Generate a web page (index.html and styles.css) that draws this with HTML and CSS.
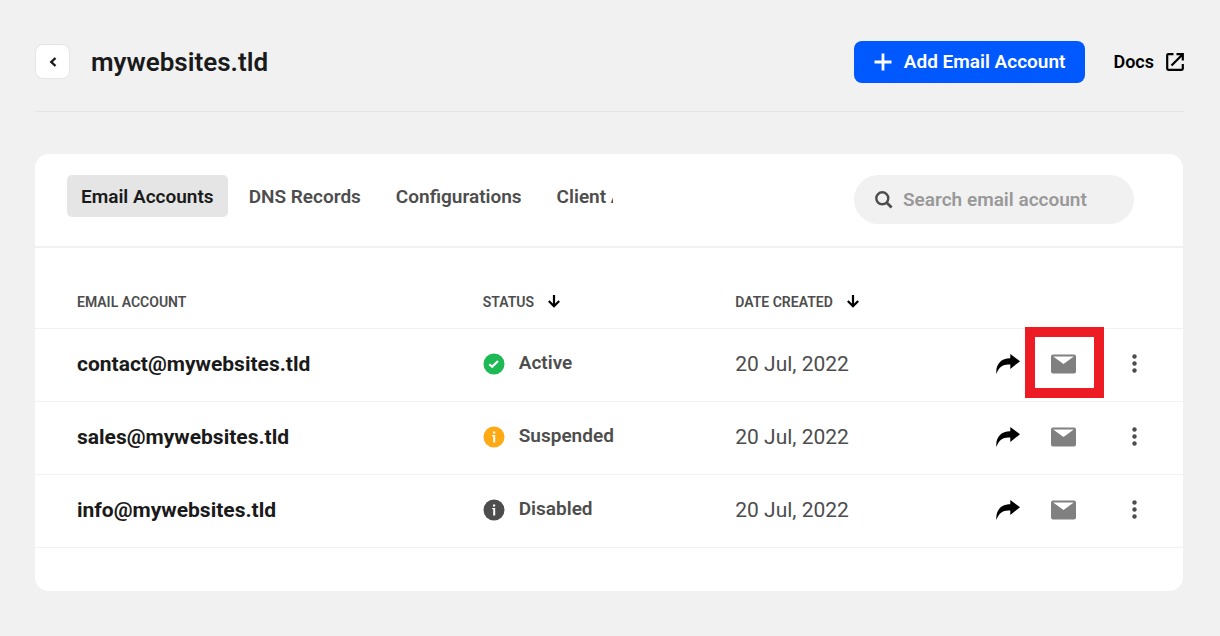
FILE: index.html
```html
<!DOCTYPE html>
<html lang="en">
<head>
  <meta charset="UTF-8">
  <meta name="viewport" content="width=device-width, initial-scale=1">
  <title>mywebsites.tld - Email Accounts</title>
  <link rel="stylesheet" href="styles.css">
</head>
<body>

  <svg class="sprite" aria-hidden="true">
    <symbol id="icon-share" viewBox="0 0 24 20">
      <path d="M14.3 0L24 7.2L14.3 15V10.6C7.5 9.9 3 12.6 0.4 20C-0.6 10.5 5 4.2 14.3 4.3Z"/>
    </symbol>
    <symbol id="icon-mail" viewBox="0 0 25 20">
      <path fill-rule="evenodd" d="M2 0.5H23Q25 0.5 25 2.5V17.5Q25 19.5 23 19.5H2Q0 19.5 0 17.5V2.5Q0 0.5 2 0.5ZM2.2 2.5L12.5 10L22.8 2.5Z"/>
    </symbol>
    <symbol id="icon-dots" viewBox="0 0 5 19">
      <circle cx="2.5" cy="2.5" r="2.2"/>
      <circle cx="2.5" cy="9.5" r="2.2"/>
      <circle cx="2.5" cy="16.5" r="2.2"/>
    </symbol>
    <symbol id="icon-down" viewBox="0 0 12 13">
      <path d="M6 0V11M0.8 6L6 11.2L11.2 6" fill="none" stroke="currentColor" stroke-width="2.2"/>
    </symbol>
    <symbol id="icon-info" viewBox="0 0 22 22">
      <circle cx="11" cy="11" r="10.5"/>
      <path fill="#fff" d="M10 5.5H12.2V7.5H10ZM9.2 9H12.2V16.5H10.2V10.3H9.2Z"/>
    </symbol>
  </svg>

  <header class="header">
    <button type="button" class="back" aria-label="Back">
      <svg width="8" height="10" viewBox="0 0 8 10"><path d="M6.5 1L2.3 5L6.5 9" fill="none" stroke="currentColor" stroke-width="2.4"/></svg>
    </button>
    <h1>mywebsites.tld</h1>
    <button type="button" class="btn">
      <svg width="18" height="18" viewBox="0 0 18 18"><path d="M9 0.5V17.5M0.5 9H17.5" fill="none" stroke="currentColor" stroke-width="2.8"/></svg>
      Add Email Account
    </button>
    <a href="#" class="docs">
      Docs
      <svg width="18" height="18" viewBox="0 0 18 18"><path d="M7.5 1.2H2.2Q1.2 1.2 1.2 2.2V15.8Q1.2 16.8 2.2 16.8H15.8Q16.8 16.8 16.8 15.8V11M10.5 1.2H16.8V7.5M16.5 1.5L5.5 12.5" fill="none" stroke="currentColor" stroke-width="2.2"/></svg>
    </a>
  </header>

  <main class="card">
    <div class="toolbar">
      <nav class="tabs">
        <a href="#" class="tab active">Email Accounts</a>
        <a href="#" class="tab">DNS Records</a>
        <a href="#" class="tab">Configurations</a>
        <a href="#" class="tab">Client Area</a>
      </nav>
      <label class="search">
        <svg width="18" height="18" viewBox="0 0 18 18"><circle cx="7.3" cy="7.3" r="6" fill="none" stroke="currentColor" stroke-width="2.4"/><path d="M11.5 11.5L16.6 16.6" stroke="currentColor" stroke-width="2.8"/></svg>
        <input type="search" placeholder="Search email account" aria-label="Search email account">
      </label>
    </div>

    <table>
      <thead>
        <tr>
          <th class="col-email">Email Account</th>
          <th class="col-status"><button type="button" class="sort">Status <svg width="12" height="13"><use href="#icon-down"/></svg></button></th>
          <th class="col-date"><button type="button" class="sort">Date Created <svg width="12" height="13"><use href="#icon-down"/></svg></button></th>
          <th class="col-actions" aria-label="Actions"></th>
        </tr>
      </thead>
      <tbody>
        <tr>
          <td class="email">contact@mywebsites.tld</td>
          <td>
            <div class="status">
              <svg class="green" width="22" height="22" viewBox="0 0 22 22"><circle cx="11" cy="11" r="10.5"/><path d="M6.3 11.2L9.2 13.8L15 8" fill="none" stroke="#fff" stroke-width="2.2"/></svg>
              Active
            </div>
          </td>
          <td class="date">20 Jul, 2022</td>
          <td>
            <div class="actions">
              <button type="button" aria-label="Share"><svg width="24" height="20"><use href="#icon-share"/></svg></button>
              <button type="button" class="mail marked" aria-label="Open mailbox"><svg width="25" height="20"><use href="#icon-mail"/></svg></button>
              <button type="button" class="more" aria-label="More"><svg width="5" height="19"><use href="#icon-dots"/></svg></button>
            </div>
          </td>
        </tr>
        <tr>
          <td class="email">sales@mywebsites.tld</td>
          <td>
            <div class="status">
              <svg class="orange" width="22" height="22"><use href="#icon-info"/></svg>
              Suspended
            </div>
          </td>
          <td class="date">20 Jul, 2022</td>
          <td>
            <div class="actions">
              <button type="button" aria-label="Share"><svg width="24" height="20"><use href="#icon-share"/></svg></button>
              <button type="button" class="mail" aria-label="Open mailbox"><svg width="25" height="20"><use href="#icon-mail"/></svg></button>
              <button type="button" class="more" aria-label="More"><svg width="5" height="19"><use href="#icon-dots"/></svg></button>
            </div>
          </td>
        </tr>
        <tr>
          <td class="email">info@mywebsites.tld</td>
          <td>
            <div class="status">
              <svg class="grey" width="22" height="22"><use href="#icon-info"/></svg>
              Disabled
            </div>
          </td>
          <td class="date">20 Jul, 2022</td>
          <td>
            <div class="actions">
              <button type="button" aria-label="Share"><svg width="24" height="20"><use href="#icon-share"/></svg></button>
              <button type="button" class="mail" aria-label="Open mailbox"><svg width="25" height="20"><use href="#icon-mail"/></svg></button>
              <button type="button" class="more" aria-label="More"><svg width="5" height="19"><use href="#icon-dots"/></svg></button>
            </div>
          </td>
        </tr>
      </tbody>
    </table>
  </main>

</body>
</html>
```
FILE: styles.css
```css
*,
*::after {
  box-sizing: border-box;
}

body {
  margin: 0;
  padding: 12px 36px 44px 35px;
  background: #f1f1f1;
  color: #1a1a1a;
  font-family: Roboto, sans-serif;
  font-size: 18px;
}

svg {
  display: block;
  flex: none;
  fill: currentColor;
}

button {
  padding: 0;
  border: none;
  background: none;
  color: inherit;
  font: inherit;
  cursor: pointer;
}

a {
  color: inherit;
  text-decoration: none;
}

.sprite {
  position: absolute;
  width: 0;
  height: 0;
}

.header {
  display: flex;
  align-items: center;
  height: 100px;
  border-bottom: 1px solid #e5e5e5;
}

.back {
  display: flex;
  align-items: center;
  justify-content: center;
  width: 35px;
  height: 35px;
  border: 1px solid #e5e5e5;
  border-radius: 8px;
  background: #fff;
}

h1 {
  flex: 1;
  margin: 0 0 0 21px;
  font-size: 26px;
  font-weight: 600;
}

.btn {
  display: flex;
  align-items: center;
  gap: 12px;
  height: 42px;
  padding: 0 20px;
  border-radius: 8px;
  background: #0059ff;
  color: #fff;
  font-size: 19px;
  font-weight: 600;
}

.docs {
  display: flex;
  align-items: center;
  gap: 12px;
  margin-left: 28px;
  color: #000;
  font-weight: 600;
}

.card {
  margin: 42px 1px 0 0;
  padding-bottom: 43px;
  border-radius: 14px;
  background: #fff;
}

.toolbar {
  display: flex;
  align-items: flex-start;
  justify-content: space-between;
  gap: 24px;
  padding: 21px 49px 22px 32px;
  border-bottom: 2px solid #f1f1f1;
}

.tabs {
  display: flex;
  flex: 0 1 546px;
  gap: 7px;
  overflow: hidden;
}

.tab {
  flex: none;
  padding: 2px 14px 0;
  border-radius: 5px;
  color: #4d4d4d;
  font-size: 19px;
  font-weight: 600;
  line-height: 40px;
}

.tab.active {
  background: #e5e5e5;
  color: #1a1a1a;
}

.search {
  display: flex;
  align-items: center;
  gap: 10px;
  width: 280px;
  height: 49px;
  padding: 0 21px;
  border-radius: 25px;
  background: #f1f1f1;
  color: #4d4d4d;
}

.search input {
  width: 100%;
  min-width: 0;
  padding: 0;
  border: none;
  outline: none;
  background: none;
  font: inherit;
  font-size: 19px;
  font-weight: 600;
}

.search input::placeholder {
  color: #999;
}

table {
  width: 100%;
  border-collapse: collapse;
  table-layout: fixed;
}

th,
td {
  padding: 0;
  border-bottom: 1px solid #f1f1f1;
  text-align: left;
}

th {
  height: 80px;
  padding-top: 28px;
  color: #4d4d4d;
  font-size: 14px;
  font-weight: 600;
  text-transform: uppercase;
}

td {
  height: 73px;
  padding-bottom: 2px;
}

th:first-child,
td:first-child {
  padding-left: 42px;
}

.col-email {
  width: 39%;
}

.col-status {
  width: 22%;
}

.col-date {
  width: 21%;
}

.sort {
  display: flex;
  align-items: center;
  gap: 14px;
  text-transform: uppercase;
}

.sort svg {
  color: #000;
}

.email {
  font-size: 21px;
  font-weight: 700;
}

.status {
  display: flex;
  align-items: flex-start;
  gap: 14px;
  color: #4d4d4d;
  font-size: 19px;
  font-weight: 600;
  line-height: 20px;
}

.green {
  color: #1db954;
}

.orange {
  color: #ffa914;
}

.grey {
  color: #4d4d4d;
}

.date {
  color: #4d4d4d;
  font-size: 21px;
}

.actions {
  display: flex;
  align-items: center;
  justify-content: flex-end;
  padding-right: 46px;
  color: #000;
}

.mail {
  position: relative;
  margin: 0 56px 0 31px;
  color: #808080;
}

/* red frame over the mail icon */
.marked::after {
  content: "";
  position: absolute;
  top: -27px;
  left: -26px;
  width: 79px;
  height: 71px;
  border: 10px solid #ed1c24;
}

.more {
  color: #4d4d4d;
}
```
